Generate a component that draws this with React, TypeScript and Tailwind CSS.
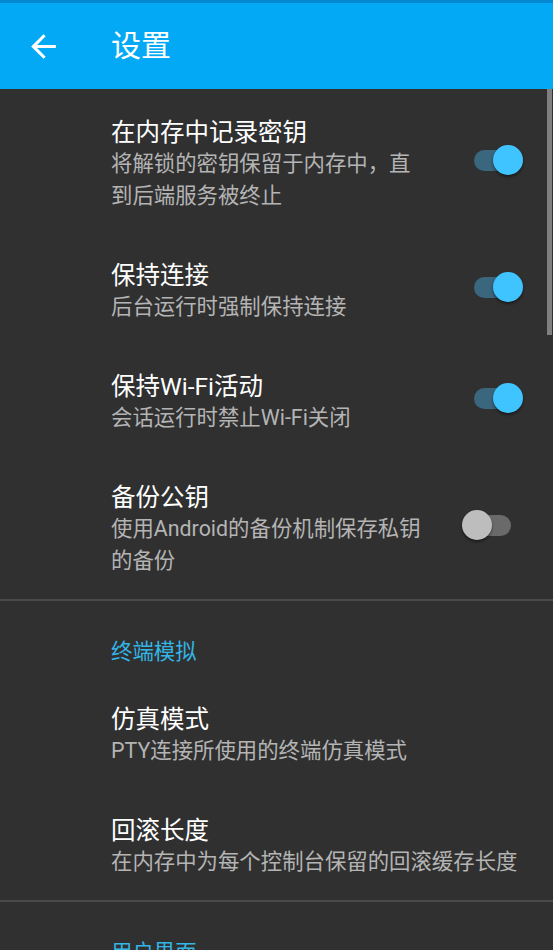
import type { ReactNode } from 'react';

const FONT = { fontFamily: 'Roboto, "Noto Sans CJK SC", sans-serif' };

function Toggle({ on }: { on: boolean }) {
  return (
    <div className="relative flex h-[30px] w-[61px] shrink-0 -translate-y-[5px] items-center justify-center">
      <div
        className={
          'h-[21px] w-[37px] rounded-full ' + (on ? 'bg-[#3a667e]' : 'bg-[#6a6a6a]')
        }
      />
      <div
        className={
          'absolute top-0 size-[30px] rounded-full shadow-[0_2px_3px_rgba(0,0,0,0.45)] ' +
          (on ? 'right-0 bg-[#40c4ff]' : 'left-0 bg-[#bdbdbd]')
        }
      />
    </div>
  );
}

function Row({ title, summary, toggle }: { title: string; summary: ReactNode; toggle?: boolean }) {
  const hasToggle = toggle !== undefined;
  return (
    <div className="flex items-center justify-between pb-[22px] pl-[111px] pr-[30px] pt-[27px]">
      <div className={hasToggle ? 'w-[315px]' : 'min-w-0 flex-1'}>
        <div className="text-[24.5px] leading-[30px] text-white">{title}</div>
        <div className="text-[21.4px] leading-[32px] text-[#b4b4b4]">{summary}</div>
      </div>
      {hasToggle ? <Toggle on={toggle} /> : null}
    </div>
  );
}

function Header({ children }: { children: ReactNode }) {
  return (
    <div className="pb-[10px] pl-[111px] pt-[35px] text-[21.4px] leading-[32px] text-[#33b5e5]">
      {children}
    </div>
  );
}

export default function App() {
  return (
    <div className="flex h-[950px] w-[553px] flex-col overflow-hidden bg-[#303030]" style={FONT}>
      <div className="h-[3px] shrink-0 bg-[#0288d1]" />
      <div className="flex h-[86px] shrink-0 items-center bg-[#03a9f4]">
        <div className="flex w-[111px] pl-[25px]">
          <svg width="37" height="37" viewBox="0 0 24 24" fill="#fff" aria-hidden>
            <path d="M20 11H7.83l5.59-5.59L12 4l-8 8 8 8 1.41-1.41L7.83 13H20v-2z" />
          </svg>
        </div>
        <span className="text-[30px] leading-none text-white">设置</span>
      </div>

      <div className="relative flex-1 pt-[2px]">
        <div className="absolute right-[1px] top-0 h-[246px] w-[5px] bg-[#7f7f7f]" />
        <Row title="在内存中记录密钥" summary="将解锁的密钥保留于内存中，直到后端服务被终止" toggle />
        <Row title="保持连接" summary="后台运行时强制保持连接" toggle />
        <Row title="保持Wi-Fi活动" summary="会话运行时禁止Wi-Fi关闭" toggle />
        <Row title="备份公钥" summary="使用Android的备份机制保存私钥的备份" toggle={false} />
        <div className="h-[2px] bg-[#4a4a4a]" />
        <Header>终端模拟</Header>
        <Row title="仿真模式" summary="PTY连接所使用的终端仿真模式" />
        <Row title="回滚长度" summary="在内存中为每个控制台保留的回滚缓存长度" />
        <div className="h-[2px] bg-[#4a4a4a]" />
        <Header>用户界面</Header>
      </div>
    </div>
  );
}
